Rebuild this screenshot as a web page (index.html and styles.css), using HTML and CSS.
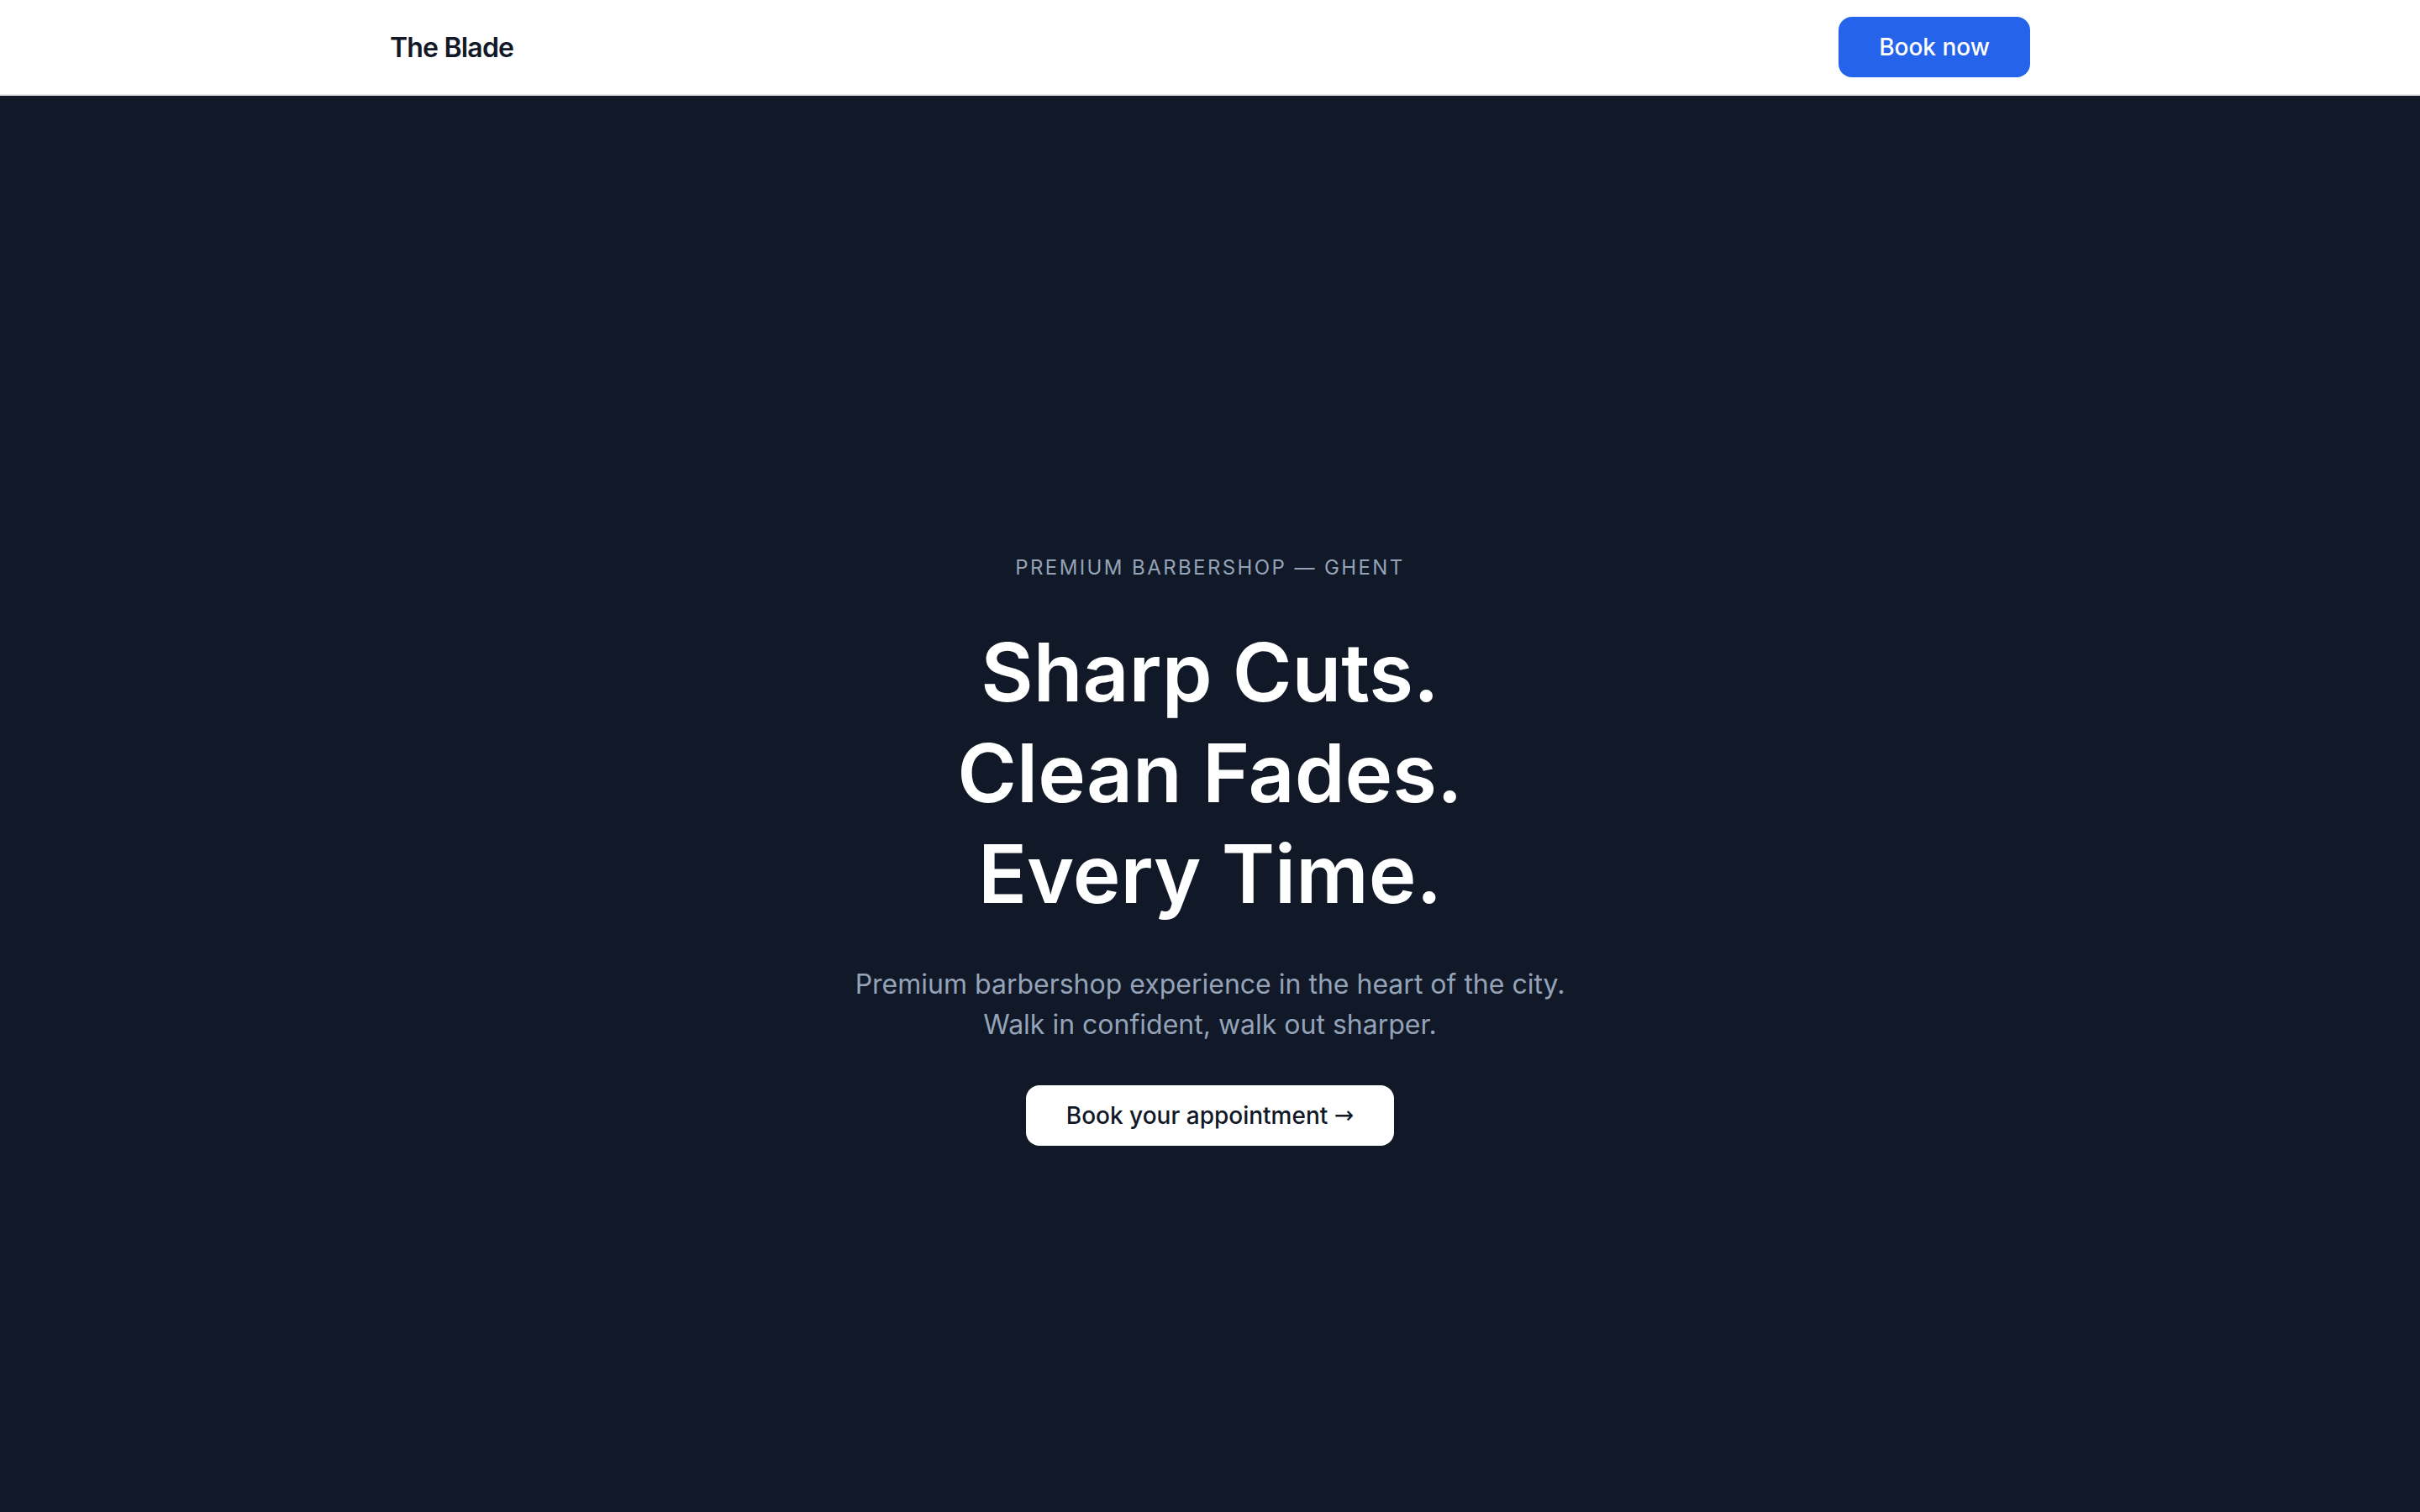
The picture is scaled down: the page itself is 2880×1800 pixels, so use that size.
FILE: index.html
```html
<!DOCTYPE html>
<html lang="en">
<head>
<meta charset="utf-8">
<meta name="viewport" content="width=device-width, initial-scale=1">
<title>The Blade — Premium Barbershop Ghent</title>
<link rel="stylesheet" href="styles.css">
</head>
<body>
<header class="site-header">
  <div class="container header-inner">
    <a class="brand" href="#">The Blade</a>
    <a class="btn btn-primary" href="#">Book now</a>
  </div>
</header>
<main>
  <section class="hero">
    <div class="container hero-inner">
      <p class="eyebrow">Premium Barbershop — Ghent</p>
      <h1 class="hero-title">Sharp Cuts.<br>Clean Fades.<br>Every Time.</h1>
      <p class="hero-sub">Premium barbershop experience in the heart of the city.<br>Walk in confident, walk out sharper.</p>
      <a class="btn btn-light" href="#">Book your appointment <span class="arrow">→</span></a>
    </div>
  </section>
</main>
</body>
</html>
```
FILE: styles.css
```css
* { box-sizing: border-box; }
html { scrollbar-width: none; }
html::-webkit-scrollbar { display: none; }
body {
  margin: 0;
  font-family: Inter, "Noto Sans", "Liberation Sans", sans-serif;
  color: #111827;
  background: #111827;
  -webkit-font-smoothing: antialiased;
}
a { text-decoration: none; color: inherit; }

.container {
  max-width: 2048px;
  margin: 0 auto;
  padding: 0 48px;
}

.site-header {
  background: #ffffff;
  border-bottom: 2px solid #e5e7eb;
}
.header-inner {
  height: 112px;
  display: flex;
  align-items: center;
  justify-content: space-between;
}
.brand {
  font-size: 32px;
  font-weight: 600;
  color: #111827;
  letter-spacing: -0.025em;
}

.btn {
  display: inline-flex;
  align-items: center;
  justify-content: center;
  height: 72px;
  padding: 0 48px;
  border-radius: 16px;
  font-size: 28px;
  font-weight: 500;
  line-height: 40px;
  white-space: pre;
}
.btn-primary {
  background: #2563eb;
  color: #ffffff;
}
.btn-light {
  background: #ffffff;
  color: #111827;
}
.arrow {
  font-family: "DejaVu Sans", sans-serif;
  font-weight: 400;
}

.hero {
  min-height: calc(100vh - 114px);
  padding-top: 110px;
  background: #111827;
  display: flex;
  align-items: center;
}
.hero-inner {
  width: 100%;
  display: flex;
  flex-direction: column;
  align-items: center;
  text-align: center;
}
.eyebrow {
  margin: 0 0 48px;
  font-size: 24px;
  line-height: 32px;
  letter-spacing: 0.1em;
  text-transform: uppercase;
  color: #94a3b8;
  font-weight: 400;
}
.hero-title {
  margin: 0 0 48px;
  font-size: 96px;
  line-height: 120px;
  font-weight: 600;
  color: #ffffff;
}
.hero-sub {
  margin: 0 0 48px;
  font-size: 32px;
  line-height: 48px;
  color: #94a3b8;
}
```
